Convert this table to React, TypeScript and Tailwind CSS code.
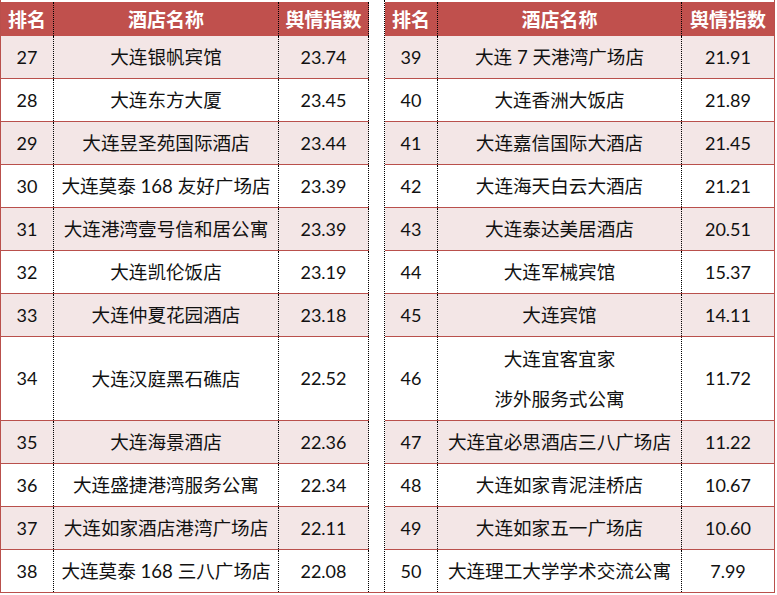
const left: [number, string[], string][] = [
  [27, ['大连银帆宾馆'], '23.74'],
  [28, ['大连东方大厦'], '23.45'],
  [29, ['大连昱圣苑国际酒店'], '23.44'],
  [30, ['大连莫泰 168 友好广场店'], '23.39'],
  [31, ['大连港湾壹号信和居公寓'], '23.39'],
  [32, ['大连凯伦饭店'], '23.19'],
  [33, ['大连仲夏花园酒店'], '23.18'],
  [34, ['大连汉庭黑石礁店'], '22.52'],
  [35, ['大连海景酒店'], '22.36'],
  [36, ['大连盛捷港湾服务公寓'], '22.34'],
  [37, ['大连如家酒店港湾广场店'], '22.11'],
  [38, ['大连莫泰 168 三八广场店'], '22.08'],
];

const right: [number, string[], string][] = [
  [39, ['大连 7 天港湾广场店'], '21.91'],
  [40, ['大连香洲大饭店'], '21.89'],
  [41, ['大连嘉信国际大酒店'], '21.45'],
  [42, ['大连海天白云大酒店'], '21.21'],
  [43, ['大连泰达美居酒店'], '20.51'],
  [44, ['大连军械宾馆'], '15.37'],
  [45, ['大连宾馆'], '14.11'],
  [46, ['大连宜客宜家', '涉外服务式公寓'], '11.72'],
  [47, ['大连宜必思酒店三八广场店'], '11.22'],
  [48, ['大连如家青泥洼桥店'], '10.67'],
  [49, ['大连如家五一广场店'], '10.60'],
  [50, ['大连理工大学学术交流公寓'], '7.99'],
];

function RankTable({ rows, cols, side }: { rows: [number, string[], string][]; cols: string; side: 'left' | 'right' }) {
  const lastCell = side === 'left' ? 'border-r border-dotted border-black' : '';
  return (
    <div className={`flex flex-col ${side === 'left' ? 'border-l' : 'border-r'} border-[#b9504c]`}>
      <div className={`grid ${cols} mt-[2px] h-[34px] bg-[#c0504d] text-white font-bold text-[19px] font-['Noto_Sans_CJK_SC',sans-serif]`}>
        <div className="flex items-center justify-center border-r border-dotted border-black">排名</div>
        <div className="flex items-center justify-center border-r border-dotted border-black">酒店名称</div>
        <div className={`flex items-center justify-center ${lastCell}`}>舆情指数</div>
      </div>
      {rows.map(([rank, name, score], i) => (
        <div
          key={rank}
          className={`grid ${cols} border-b border-[#b9504c] ${i === 7 ? 'h-[84px]' : 'h-[43px]'} ${i % 2 === 0 ? 'bg-[#f3e6e6]' : 'bg-white'}`}
        >
          <div className="flex items-center justify-center border-r border-dotted border-black">{rank}</div>
          <div className="flex flex-col items-center justify-center border-r border-dotted border-black leading-[40px] text-[18.6px]">
            {name.map((n) => (
              <span key={n}>{n}</span>
            ))}
          </div>
          <div className={`flex items-center justify-center ${lastCell}`}>{score}</div>
        </div>
      ))}
    </div>
  );
}

export default function App() {
  return (
    <div className="flex w-[777px] bg-white text-[18px] text-[#111] font-['Lato','Noto_Sans_CJK_SC',sans-serif]">
      <RankTable rows={left} cols="grid-cols-[53px_225px_90px]" side="left" />
      <div className="flex border-b border-[#b9504c]">
        <div className="w-[16px] border-r border-dotted border-black" />
      </div>
      <RankTable rows={right} cols="grid-cols-[53px_244px_92px]" side="right" />
    </div>
  );
}
